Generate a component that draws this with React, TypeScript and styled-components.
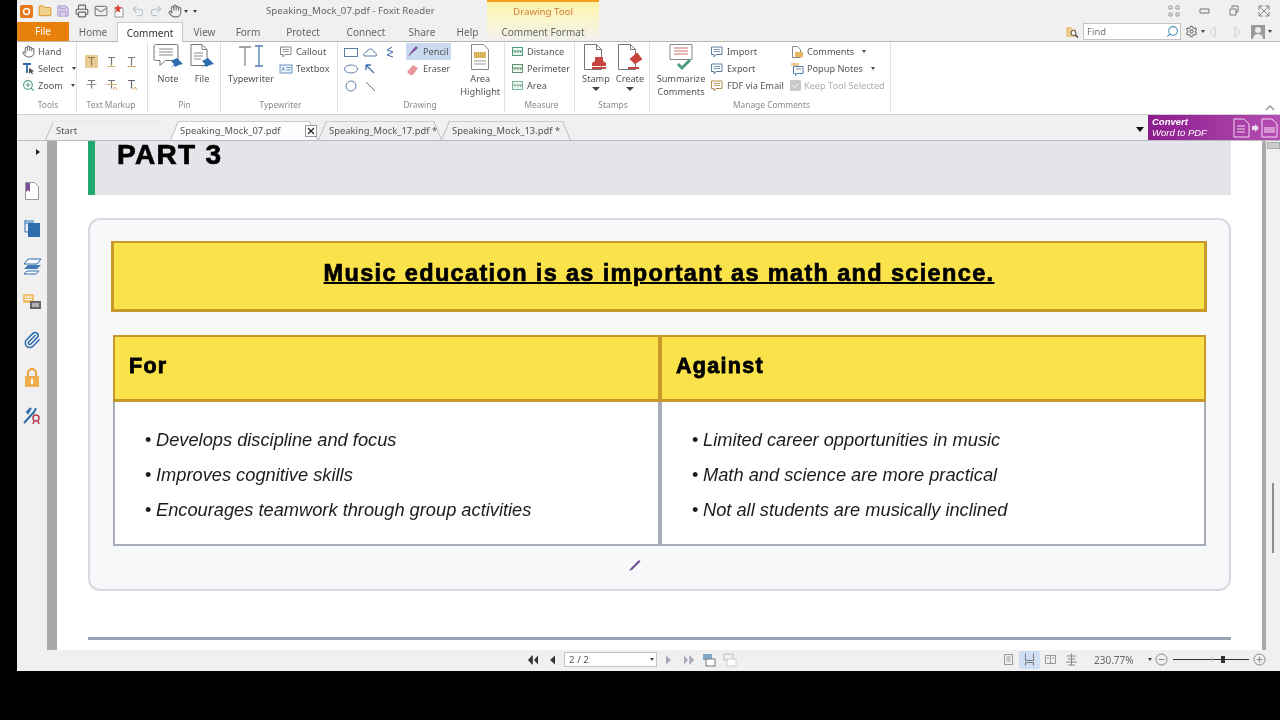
import * as React from 'react';
import styled, { createGlobalStyle } from 'styled-components';
import { Hand, Search, Settings, Undo2, Redo2, Printer, Paperclip, ZoomIn, Folder, Save, Mail } from 'lucide-react';

const Global = createGlobalStyle`
	html, body { margin: 0; padding: 0; background: #000; height: 100%; overflow: hidden; }
	* { box-sizing: border-box; }
`;

const Frame = styled.div`
	width: 1263px;
	height: 671px;
	margin-left: 17px;
	display: flex;
	flex-direction: column;
	background: #f0f0f0;
	font-family: "Noto Sans", "Open Sans", sans-serif;
	font-size: 9.2px;
	color: #555;
	overflow: hidden;
	filter: blur(0.3px);
`;

const TitleBar = styled.div`
	height: 22px;
	flex: none;
	display: flex;
	align-items: stretch;
`;

const Qab = styled.div`
	width: 249px;
	display: flex;
	align-items: center;
`;

const QabItem = styled.span`
	width: 18.6px;
	display: flex;
	justify-content: center;
	align-items: center;
`;

const Title = styled.div`
	width: 221px;
	line-height: 22px;
	font-size: 9.7px;
	color: #666;
`;

const ContextHead = styled.div`
	width: 112px;
	line-height: 20px;
	border-top: 2px solid #f2a21e;
	background: linear-gradient(#fdf2a8, #fbf5cf);
	color: #cf7f3a;
	text-align: center;
	font-size: 9.7px;
`;

const WinControls = styled.div`
	margin-left: auto;
	display: flex;
	align-items: center;
	padding-right: 1px;
`;

const WinBtn = styled.span`
	width: 30px;
	display: flex;
	justify-content: center;
`;

const MenuRow = styled.div`
	height: 19px;
	flex: none;
	display: flex;
	align-items: stretch;
	position: relative;
`;

const FileTab = styled.div`
	width: 52px;
	background: #e8810c;
	color: #fff;
	text-align: center;
	line-height: 19px;
	font-size: 10px;
`;

const MenuTab = styled.div<{ $w: number; $active?: boolean; $context?: boolean }>`
	width: ${(p) => p.$w}px;
	text-align: center;
	line-height: 20px;
	font-size: 10px;
	color: ${(p) => (p.$active ? '#333' : '#666')};
	background: ${(p) => (p.$active ? '#fff' : p.$context ? 'linear-gradient(#fbf5cf, #f0f0f0)' : 'transparent')};
	${(p) => p.$active && 'border: 1px solid #c8c8c8; border-bottom: none; position: relative; z-index: 1; height: 20px;'}
`;

const MenuRight = styled.div`
	margin-left: auto;
	display: flex;
	align-items: center;
	gap: 3px;
	padding-right: 8px;
`;

const FindBox = styled.div`
	width: 98px;
	height: 17px;
	margin-left: 1px;
	background: #fff;
	border: 1px solid #c4c4c4;
	display: flex;
	align-items: center;
	justify-content: space-between;
	padding: 0 1px 0 3px;
	color: #777;
	font-size: 9.5px;
`;

const Caret = styled.span<{ $c?: string }>`
	display: inline-block;
	width: 0;
	height: 0;
	border-left: 2.5px solid transparent;
	border-right: 2.5px solid transparent;
	border-top: 3px solid ${(p) => p.$c || '#444'};
	margin-left: 5px;
	vertical-align: middle;
`;

const Ribbon = styled.div`
	height: 74px;
	flex: none;
	background: #fff;
	border-top: 1px solid #b8b8b8;
	border-bottom: 1px solid #cfcfcf;
	display: flex;
	position: relative;
`;

const Group = styled.div<{ $w: number; $pl?: number }>`
	width: ${(p) => p.$w}px;
	padding: 1px 0 0 ${(p) => p.$pl || 0}px;
	border-right: 1px solid #e2e2e2;
	margin-bottom: 2px;
	display: flex;
	flex-direction: column;
`;

const GroupBody = styled.div`
	height: 55px;
	flex: none;
	display: flex;
	align-items: flex-start;
`;

const GroupLabel = styled.div`
	height: 14px;
	line-height: 13px;
	margin-left: -2px;
	text-align: center;
	font-size: 8.4px;
	color: #8a8a8a;
`;

const Stack = styled.div<{ $w?: number; $ml?: number }>`
	${(p) => p.$w && `width: ${p.$w}px;`}
	margin-left: ${(p) => p.$ml || 0}px;
	display: flex;
	flex-direction: column;
`;

const SmallBtn = styled.div<{ $on?: boolean; $off?: boolean }>`
	height: 17px;
	display: flex;
	align-items: center;
	gap: 3px;
	white-space: nowrap;
	background: ${(p) => (p.$on ? '#c9daf0' : 'transparent')};
	color: ${(p) => (p.$off ? '#b0b0b0' : '#555')};
	svg { flex: none; }
`;

const BigBtn = styled.div<{ $w: number; $ml?: number }>`
	width: ${(p) => p.$w}px;
	margin-left: ${(p) => p.$ml || 0}px;
	display: flex;
	flex-direction: column;
	align-items: center;
	line-height: 13px;
	text-align: center;
	svg { margin-bottom: 1px; flex: none; }
`;

const IconGrid = styled.div`
	display: grid;
	grid-template-columns: repeat(3, 20px);
	grid-auto-rows: 23px;
	justify-items: center;
	align-items: center;
	margin: 7px 0 0 4px;
`;

const ShapeGrid = styled.div`
	display: grid;
	grid-template-columns: 18px 20px 20px;
	grid-auto-rows: 17px;
	justify-items: center;
	align-items: center;
	margin-left: 4px;
`;

const Highlight = styled.span`
	width: 13px;
	height: 13px;
	background: #e9cb95;
	display: flex;
	align-items: center;
	justify-content: center;
`;

const Collapse = styled.span`
	position: absolute;
	right: 5px;
	bottom: 3px;
	line-height: 0;
`;

const TabBar = styled.div`
	height: 26px;
	flex: none;
	display: flex;
	align-items: flex-end;
	padding-left: 28px;
	border-bottom: 1px solid #b9bac2;
	position: relative;
`;

const DocTab = styled.div<{ $w: number; $active?: boolean; $faint?: boolean }>`
	width: ${(p) => p.$w}px;
	height: 19px;
	position: relative;
	line-height: 20px;
	font-size: 9.4px;
	color: #555;
	padding-left: ${(p) => (p.$active ? 10 : 11)}px;
	&::before, &::after {
		content: '';
		position: absolute;
		top: 0;
		bottom: 0;
		background: ${(p) => (p.$active ? '#fdfdfd' : '#f0f0f0')};
		border-top: 1px solid ${(p) => (p.$faint ? '#e6e6e6' : '#cdcdcd')};
		transform-origin: bottom;
	}
	&::before {
		left: 0;
		right: 50%;
		border-left: 1px solid #bdbdbd;
		transform: skewX(-23deg);
	}
	&::after {
		right: 0;
		left: 50%;
		border-right: 1px solid ${(p) => (p.$faint ? 'transparent' : '#bdbdbd')};
		transform: skewX(23deg);
	}
`;

const DocTabText = styled.span`
	position: relative;
	z-index: 1;
	white-space: nowrap;
`;

const CloseBox = styled.span`
	position: absolute;
	z-index: 1;
	right: 1px;
	top: 4px;
	width: 12px;
	height: 12px;
	border: 1px solid #999;
	background: #fff;
	display: flex;
	align-items: center;
	justify-content: center;
`;

const Promo = styled.div`
	margin-left: 4px;
	width: 132px;
	height: 25px;
	background: linear-gradient(90deg, #8b1c8d, #b54fb3);
	color: #fff;
	display: flex;
	align-items: center;
	justify-content: space-between;
	padding: 0 2px 0 4px;
	font-family: "Liberation Sans", sans-serif;
	font-style: italic;
	font-size: 9.5px;
	line-height: 10.5px;
`;

const PromoDrop = styled.span`
	width: 0;
	height: 0;
	border-left: 4px solid transparent;
	border-right: 4px solid transparent;
	border-top: 5px solid #111;
	margin: 0 0 8px auto;
`;

const PromoIcons = styled.span`
	display: flex;
	align-items: center;
	gap: 2px;
`;

const Main = styled.div`
	flex: 1;
	min-height: 0;
	display: flex;
`;

const Rail = styled.div`
	width: 30px;
	flex: none;
	display: flex;
	flex-direction: column;
	align-items: center;
	gap: 19.5px;
	padding-top: 8px;
`;

const RailToggle = styled.span`
	width: 0;
	height: 0;
	border-top: 3.5px solid transparent;
	border-bottom: 3.5px solid transparent;
	border-left: 4px solid #222;
	margin: 0 0 7px 12px;
`;

const Gutter = styled.div<{ $w: number }>`
	width: ${(p) => p.$w}px;
	flex: none;
	background: #a9a9ab;
	position: relative;
`;

const Grip = styled.span`
	position: absolute;
	left: 1px;
	right: 1px;
	top: 215px;
	height: 30px;
	background-image: radial-gradient(#8f8f91 0.6px, transparent 0.7px);
	background-size: 2px 2px;
`;

const Page = styled.div`
	flex: 1;
	min-width: 0;
	background: #fff;
	padding: 0 31px;
	overflow: hidden;
	position: relative;
`;

const Band = styled.div`
	height: 54px;
	background: #e4e5ea;
	border-left: 7px solid #1fa971;
	padding-left: 22px;
	margin-bottom: 23px;
`;

const PartTitle = styled.h1`
	margin: 0;
	font: 900 28px/28px "Liberation Sans", sans-serif;
	-webkit-text-stroke: 0.7px #000;
	letter-spacing: 1.3px;
	color: #000;
`;

const Card = styled.div`
	height: 373px;
	background: #f7f8fa;
	border: 2px solid #d6d9df;
	border-radius: 12px;
	padding: 21px 22px 0 21px;
	margin-bottom: 46px;
`;

const Topic = styled.div`
	height: 71px;
	background: #f9e24a;
	border: 3px solid #c9982a;
	border-top-width: 2px;
	padding-bottom: 6px;
	display: flex;
	align-items: center;
	justify-content: center;
	margin-bottom: 23px;
`;

const TopicText = styled.h2`
	margin: 0;
	font: 700 23.5px/26px "Liberation Sans", sans-serif;
	-webkit-text-stroke: 0.7px #000;
	letter-spacing: 1.35px;
	text-decoration: underline;
	text-decoration-thickness: 2px;
	color: #000;
`;

const Columns = styled.div`
	display: grid;
	grid-template-columns: 547px 546px;
	margin: 0 0 0 2px;
`;

const ColHead = styled.div`
	height: 67px;
	background: #f9e24a;
	border: 2px solid #c9982a;
	border-bottom-width: 3px;
	padding: 0 0 3px 14px;
	display: flex;
	align-items: center;
	font: 700 21.5px "Liberation Sans", sans-serif;
	-webkit-text-stroke: 0.8px #000;
	letter-spacing: 1.3px;
	color: #000;
`;

const ColBody = styled.ul`
	height: 144px;
	margin: 0;
	list-style: none;
	background: #fff;
	border: 2px solid #a9adb9;
	border-top: none;
	padding: 20px 0 0 30px;
`;

const Point = styled.li`
	height: 35px;
	font: italic 18.25px/35px "Liberation Sans", sans-serif;
	color: #1c1c1c;
	&::before {
		content: '•';
		font-style: normal;
		display: inline-block;
		width: 11px;
	}
`;

const Rule = styled.div`
	height: 3px;
	background: #9ba0b4;
`;

const PenCursor = styled.svg`
	position: absolute;
	left: 571px;
	top: 417px;
`;

const Scroller = styled.div`
	width: 14px;
	flex: none;
	position: relative;
`;

const ScrollCap = styled.span`
	position: absolute;
	top: 1px;
	left: 1px;
	right: 0;
	height: 7px;
	background: #ccc;
	border: 1px solid #aaa;
`;

const ScrollThumb = styled.span`
	position: absolute;
	top: 342px;
	left: 6px;
	width: 2px;
	height: 70px;
	background: #8e8e96;
`;

const StatusBar = styled.div`
	height: 21px;
	flex: none;
	display: flex;
	align-items: center;
	padding: 0 0 2px 509px;
`;

const PagerBtn = styled.span<{ $w: number }>`
	width: ${(p) => p.$w}px;
	display: flex;
	justify-content: center;
`;

const PageInput = styled.div`
	width: 93px;
	height: 15px;
	margin: 0 5px 0 0;
	background: #fff;
	border: 1px solid #c4c4c4;
	display: flex;
	align-items: center;
	justify-content: space-between;
	padding: 0 2px 0 4px;
	font-size: 9.8px;
	line-height: 13px;
	color: #555;
`;

const StatusRight = styled.div`
	margin-left: auto;
	display: flex;
	align-items: center;
	padding-right: 14px;
`;

const ViewBtn = styled.span<{ $on?: boolean }>`
	width: 21px;
	height: 18px;
	display: flex;
	align-items: center;
	justify-content: center;
	background: ${(p) => (p.$on ? '#cfe0f5' : 'transparent')};
`;

const Zoom = styled.span`
	margin-left: 12px;
	width: 54px;
	font-size: 10px;
	color: #666;
`;

const SliderTrack = styled.span`
	position: relative;
	width: 76px;
	height: 1px;
	background: #333;
	margin: 0 4px 0 5px;
`;

const SliderThumb = styled.span`
	position: absolute;
	left: 48px;
	top: -3px;
	width: 4px;
	height: 7px;
	background: #333;
`;

const SliderTick = styled.span`
	position: absolute;
	left: 38px;
	top: -2px;
	width: 1px;
	height: 5px;
	background: #bbb;
`;

const Svg = ({ s = 14, w, h, vb, children }: { s?: number; w?: number; h?: number; vb?: string; children: React.ReactNode }) => (
	<svg width={w || s} height={h || s} viewBox={vb || `0 0 ${w || s} ${h || s}`} fill="none">
		{children}
	</svg>
);

const Tee = ({ c = '#777', under = '#d9b36a', mark = false, strike = false }: { c?: string; under?: string; mark?: boolean; strike?: boolean }) => (
	<Svg s={13}>
		<path d="M3 2.5h7M6.5 2.5v8" stroke={c} strokeWidth="1.2" />
		{!strike && <path d="M2.5 11.5h8" stroke={under} strokeWidth="1" />}
		{strike && <path d="M1.5 6.5h10" stroke={under} strokeWidth="1" />}
		{mark && <path d="M8 12l2-3 2 3" stroke="#e0a060" strokeWidth="1" />}
	</Svg>
);

const Bubble = ({ c = '#777' }: { c?: string }) => (
	<Svg s={14}>
		<path d="M1.5 2h10.5v7.5H6l-2 2.5v-2.5H1.5z" stroke={c} fill="#fff" />
		<path d="M3.5 4.5h6.5M3.5 6.5h6.5" stroke={c} strokeWidth="0.8" />
	</Svg>
);

const PinMark = () => <path d="M17 26l4-5-3-3 6-3 6 6-4 1-4 2-1-2z" fill="#2d6cad" />;

const NoteIcon = () => (
	<Svg w={30} h={28}>
		<path d="M2.5 1.5h21a1.500 1.500 0 0 1 1.500 1.500v13a1.500 1.500 0 0 1-1.500 1.500H12l-5 5v-5H2.500A1.500 1.500 0 0 1 1 16V3a1.500 1.500 0 0 1 1.500-1.500z" stroke="#777" fill="#fff" />
		<path d="M6 6h14M6 9h14M6 12h14" stroke="#888" />
		<PinMark />
	</Svg>
);

const FileIcon = () => (
	<Svg w={26} h={28}>
		<path d="M2 1.500h11l5 5v16H2z" stroke="#777" fill="#fff" />
		<path d="M13 1.500v5h5M5 10h9M5 13h9M5 16h7" stroke="#888" />
		<g transform="translate(-5 0)"><PinMark /></g>
	</Svg>
);

const TypewriterIcon = () => (
	<Svg w={28} h={28}>
		<path d="M2 4h12M8 4v19" stroke="#888" strokeWidth="1.300" />
		<path d="M18 3h8M22 3v20M18 23h8" stroke="#4a7fb5" strokeWidth="1.300" />
	</Svg>
);

const DocBase = () => <path d="M1.500 1.500h12l5 5v20h-17z" stroke="#777" fill="#fff" />;

const StampIcon = () => (
	<Svg w={26} h={28}>
		<DocBase />
		<path d="M13.500 1.500v5h5" stroke="#777" />
		<path d="M12 14h8v4l3 2v3H9v-3l3-2z" fill="#c8453f" />
		<path d="M9 25h14" stroke="#c8453f" strokeWidth="2" />
	</Svg>
);

const CreateIcon = () => (
	<Svg w={26} h={28}>
		<DocBase />
		<path d="M13.500 1.500v5h5" stroke="#777" />
		<path d="M14 16l6-5 4 5-6 4zM11 25h11" stroke="#c8453f" strokeWidth="2" fill="#c8453f" />
	</Svg>
);

const AreaIcon = () => (
	<Svg w={20} h={28}>
		<path d="M1.500 1.500h12l5 5v20h-17z" stroke="#888" fill="#fff" />
		<rect x="4" y="9" width="12" height="6" fill="#e9c56a" />
		<path d="M4 10h12M4 12h12M4 14h12" stroke="#8a6a2a" strokeWidth="0.700" strokeDasharray="1 1" />
		<path d="M4 18h12M4 21h12" stroke="#999" />
	</Svg>
);

const SummaryIcon = () => (
	<Svg w={26} h={28}>
		<path d="M2 1.500h22v15H2z" stroke="#888" fill="#fff" />
		<path d="M6 5h14M6 8h14M6 11h14" stroke="#d0706a" />
		<path d="M10 21l4 4 8-8" stroke="#4f9a83" strokeWidth="3" />
	</Svg>
);

const Ruler = ({ c }: { c: string }) => (
	<Svg s={13}>
		<rect x="1.500" y="2.500" width="10" height="8" stroke={c} fill="#eef7ee" />
		<path d="M1.500 6h10M4 6v2M7 6v2M9.500 6v2" stroke={c} />
	</Svg>
);

const DocSmall = () => (
	<Svg s={14}>
		<path d="M2.500 1.500h5l3 3v8h-8z" stroke="#888" fill="#fff" />
		<rect x="5" y="7" width="8" height="5" fill="#e9b560" />
	</Svg>
);

const PopupIcon = () => (
	<Svg s={14}>
		<path d="M1 1h8v3H1z" fill="#f0c890" />
		<path d="M3.500 4.500h9.500v7H7l-1.500 2v-2h-2z" stroke="#4a7fb5" fill="#fff" />
		<path d="M6 7h5" stroke="#888" />
	</Svg>
);

const Pager = ({ dir = 1, double = false, c = '#333' }: { dir?: number; double?: boolean; c?: string }) => (
	<Svg w={12} h={10}>
		<g transform={dir < 0 ? 'matrix(-1 0 0 1 12 0)' : undefined}>
			{double && <path d="M1 0.500v9l4-4.500z" fill={c} />}
			{double ? <path d="M7 0.500v9l4-4.500zM6 0.500h.8v9H6z" fill={c} /> : <path d="M3 0.500v9l5-4.500z" fill={c} />}
		</g>
	</Svg>
);

const PageView = ({ kind }: { kind: number }) => (
	<Svg s={13}>
		{kind === 0 && <path d="M2.500 1.500h8v10h-8zM4.500 4h4M4.500 6h4M4.500 8h4" stroke="#999" />}
		{kind === 1 && <path d="M2.500 .5v7h8v-7M2.500 12.500v-3h8v3" stroke="#777" />}
		{kind === 2 && <path d="M1.500 2.500h10v8h-10zM6.500 2.500v8M3 5h2M8 5h2" stroke="#999" />}
		{kind === 3 && <path d="M6.500 .5v12M2 3h9M3 6h7M1 9h11M3 12h7" stroke="#888" />}
	</Svg>
);

const Circled = ({ plus = false }: { plus?: boolean }) => (
	<Svg s={13}>
		<circle cx="6.500" cy="6.500" r="5.500" stroke="#888" />
		<path d={plus ? 'M3.500 6.500h6M6.500 3.500v6' : 'M3.500 6.500h6'} stroke="#888" />
	</Svg>
);

const App = (): React.ReactElement => (
	<Frame>
		<Global />
		<TitleBar>
			<Qab>
				<QabItem>
					<Svg s={13}><rect width="13" height="13" rx="2" fill="#e8761a" /><circle cx="6.500" cy="6.500" r="3" stroke="#fff" strokeWidth="1.500" /></Svg>
				</QabItem>
				<QabItem><Folder size={14} color="#d9a441" fill="#f1d08a" /></QabItem>
				<QabItem><Save size={14} color="#b7a6d6" fill="#d8cdeb" /></QabItem>
				<QabItem><Printer size={14} color="#666" /></QabItem>
				<QabItem><Mail size={14} color="#888" /></QabItem>
				<QabItem>
					<Svg s={14}><path d="M3 4h8v9H3z" stroke="#999" fill="#fff" /><path d="M6 0l1 3 3 .5-2.500 2 1 3L6 7 3.500 8.500l1-3-2.500-2L5 3z" fill="#d9402f" /></Svg>
				</QabItem>
				<QabItem><Undo2 size={14} color="#b8c4d0" /></QabItem>
				<QabItem><Redo2 size={14} color="#b8c4d0" /></QabItem>
				<QabItem><Hand size={14} color="#777" /></QabItem>
				<Caret style={{ marginLeft: 0 }} />
				<Caret />
			</Qab>
			<Title>Speaking_Mock_07.pdf - Foxit Reader</Title>
			<ContextHead>Drawing Tool</ContextHead>
			<WinControls>
				<WinBtn>
					<Svg s={12}><path d="M1 1h3v3H1zM8 1h3v3H8zM1 8h3v3H1zM8 8h3v3H8z" stroke="#999" /></Svg>
				</WinBtn>
				<WinBtn>
					<Svg w={11} h={6}><path d="M1 1h9v4H1z" stroke="#777" /></Svg>
				</WinBtn>
				<WinBtn>
					<Svg s={12}><path d="M4 3V1h6v6H8M2 4h6v6H2z" stroke="#777" /></Svg>
				</WinBtn>
				<WinBtn>
					<Svg s={12}><path d="M1 1l10 10M11 1L1 11M1 5V1h4M7 1h4v4M11 7v4H7M5 11H1V7" stroke="#888" /></Svg>
				</WinBtn>
			</WinControls>
		</TitleBar>
		<MenuRow>
			<FileTab>File</FileTab>
			<MenuTab $w={48}>Home</MenuTab>
			<MenuTab $w={66} $active>Comment</MenuTab>
			<MenuTab $w={43}>View</MenuTab>
			<MenuTab $w={44}>Form</MenuTab>
			<MenuTab $w={66}>Protect</MenuTab>
			<MenuTab $w={60}>Connect</MenuTab>
			<MenuTab $w={52}>Share</MenuTab>
			<MenuTab $w={39}>Help</MenuTab>
			<MenuTab $w={112} $context>Comment Format</MenuTab>
			<MenuRight>
				<Svg s={14}><path d="M1 2h5l2 2h3v8H1z" fill="#ecc98c" /><circle cx="8.500" cy="8" r="2.500" stroke="#444" fill="#fff" /><path d="M10.500 10l2.500 2.500" stroke="#444" strokeWidth="1.500" /></Svg>
				<FindBox>
					Find
					<Search size={13} color="#4a8cb5" style={{ transform: 'scaleX(-1)' }} />
				</FindBox>
				<Settings size={13} color="#777" style={{ marginLeft: 1 }} />
				<Caret style={{ marginLeft: 0 }} />
				<Svg w={10} h={12} vb="0 0 10 12"><path d="M7 1v10L2 6z" stroke="#ccc" fill="#f4f4f4" /></Svg>
				<span style={{ width: 8 }} />
				<Svg w={10} h={12} vb="0 0 10 12"><path d="M3 1v10l5-5z" stroke="#ccc" fill="#f4f4f4" /></Svg>
				<span style={{ width: 3 }} />
				<Svg s={14}><rect width="14" height="14" fill="#9a9a9a" /><circle cx="7" cy="5" r="3" fill="#eee" /><path d="M2 14c0-4 3-5 5-5s5 1 5 5z" fill="#eee" /></Svg>
				<Caret style={{ marginLeft: 0 }} />
			</MenuRight>
		</MenuRow>
		<Ribbon>
			<Group $w={60} $pl={5}>
				<GroupBody>
					<Stack>
						<SmallBtn><Hand size={13} color="#777" />Hand</SmallBtn>
						<SmallBtn>
							<Svg s={13}><path d="M1 2h8M5 2v9" stroke="#2d6cad" strokeWidth="1.800" /><path d="M7 6l5 3-2 1 1 2-1 .5-1-2-2 1z" fill="#555" /></Svg>
							Select<Caret />
						</SmallBtn>
						<SmallBtn><ZoomIn size={13} color="#4f9a83" />Zoom<Caret /></SmallBtn>
					</Stack>
				</GroupBody>
				<GroupLabel>Tools</GroupLabel>
			</Group>
			<Group $w={71}>
				<GroupBody>
					<IconGrid>
						<Highlight><Tee under="transparent" c="#9a7a40" /></Highlight>
						<Tee />
						<Tee under="#c9a060" />
						<Tee strike under="#999" />
						<Tee mark under="#d9b36a" strike />
						<Tee mark c="#666" under="transparent" />
					</IconGrid>
				</GroupBody>
				<GroupLabel>Text Markup</GroupLabel>
			</Group>
			<Group $w={73} $pl={3}>
				<GroupBody>
					<BigBtn $w={34}><NoteIcon />Note</BigBtn>
					<BigBtn $w={34}><FileIcon />File</BigBtn>
				</GroupBody>
				<GroupLabel>Pin</GroupLabel>
			</Group>
			<Group $w={117} $pl={5}>
				<GroupBody>
					<BigBtn $w={50}><TypewriterIcon />Typewriter</BigBtn>
					<Stack $ml={3}>
						<SmallBtn><Bubble c="#888" />Callout</SmallBtn>
						<SmallBtn>
							<Svg s={14}><rect x="1" y="3" width="12" height="8" stroke="#6a93bd" fill="#eaf1f8" /><path d="M7.500 5.500h4M7.500 8h4M3 8.500l1.200-3 1.200 3" stroke="#6a93bd" /></Svg>
							Textbox
						</SmallBtn>
					</Stack>
				</GroupBody>
				<GroupLabel>Typewriter</GroupLabel>
			</Group>
			<Group $w={167}>
				<GroupBody>
					<ShapeGrid>
						<Svg w={14} h={10}><rect x="0.500" y="1.500" width="13" height="8" stroke="#5a7fa5" /></Svg>
						<Svg w={14} h={11}><path d="M1 10c-1-3 2-4 3-4 0-3 6-5 7 0 2 0 3 3 2 4z" stroke="#5a7fa5" /></Svg>
						<Svg s={12}><path d="M8 1L3 4l6 2-6 3 6 2" stroke="#3f6fb0" /></Svg>
						<Svg w={14} h={10}><ellipse cx="7" cy="5" rx="6.500" ry="4" stroke="#5a7fa5" /></Svg>
						<Svg s={12}><path d="M2 2l8 8M2 2h5M2 2v5" stroke="#3f6fb0" strokeWidth="1.300" /></Svg>
						<span />
						<Svg s={12}><circle cx="6" cy="6" r="5" stroke="#5a7fa5" /></Svg>
						<Svg s={12}><path d="M2 2l9 9" stroke="#777" /></Svg>
					</ShapeGrid>
					<Stack $w={45} $ml={6}>
						<SmallBtn $on>
							<Svg s={14}><path d="M2 12l2-4 6-7 2 2-7 6z" fill="#7a4fa0" /></Svg>
							Pencil
						</SmallBtn>
						<SmallBtn>
							<Svg s={14}><path d="M1 10l6-7 5 3-5 7H4z" fill="#e9969a" /></Svg>
							Eraser
						</SmallBtn>
					</Stack>
					<BigBtn $w={48} $ml={6}>
						<AreaIcon />Area<br />Highlight
					</BigBtn>
				</GroupBody>
				<GroupLabel>Drawing</GroupLabel>
			</Group>
			<Group $w={70} $pl={6}>
				<GroupBody>
					<Stack>
						<SmallBtn><Ruler c="#4f9a83" />Distance</SmallBtn>
						<SmallBtn><Ruler c="#5f8f70" />Perimeter</SmallBtn>
						<SmallBtn><Ruler c="#7fb59a" />Area</SmallBtn>
					</Stack>
				</GroupBody>
				<GroupLabel>Measure</GroupLabel>
			</Group>
			<Group $w={75} $pl={4}>
				<GroupBody>
					<BigBtn $w={34}>
						<StampIcon />Stamp
						<Caret style={{ margin: '2px 0 0', borderWidth: '4px 4px 0' }} />
					</BigBtn>
					<BigBtn $w={34}>
						<CreateIcon />Create
						<Caret style={{ margin: '2px 0 0', borderWidth: '4px 4px 0' }} />
					</BigBtn>
				</GroupBody>
				<GroupLabel>Stamps</GroupLabel>
			</Group>
			<Group $w={241} $pl={5}>
				<GroupBody>
					<BigBtn $w={52}>
						<SummaryIcon />Summarize<br />Comments
					</BigBtn>
					<Stack $w={80} $ml={3}>
						<SmallBtn><Bubble c="#5a7fa5" />Import</SmallBtn>
						<SmallBtn><Bubble c="#5a7fa5" />Export</SmallBtn>
						<SmallBtn><Bubble c="#b08a50" />FDF via Email</SmallBtn>
					</Stack>
					<Stack>
						<SmallBtn><DocSmall />Comments<Caret /></SmallBtn>
						<SmallBtn><PopupIcon />Popup Notes<Caret /></SmallBtn>
						<SmallBtn $off>
							<Svg s={11}><rect width="11" height="11" rx="1" fill="#c9c9c9" /><path d="M2.500 5.500l2 2 4-4" stroke="#fff" /></Svg>
							Keep Tool Selected
						</SmallBtn>
					</Stack>
				</GroupBody>
				<GroupLabel>Manage Comments</GroupLabel>
			</Group>
			<Collapse>
				<Svg w={10} h={6}><path d="M1 5l4-4 4 4" stroke="#999" strokeWidth="1.500" /></Svg>
			</Collapse>
		</Ribbon>
		<TabBar>
			<DocTab $w={125} $faint><DocTabText>Start</DocTabText></DocTab>
			<DocTab $w={148} $active style={{ zIndex: 1 }}>
				<DocTabText>Speaking_Mock_07.pdf</DocTabText>
				<CloseBox>
					<Svg s={8}><path d="M1 1l6 6M7 1L1 7" stroke="#222" strokeWidth="1.200" /></Svg>
				</CloseBox>
			</DocTab>
			<DocTab $w={123}><DocTabText>Speaking_Mock_17.pdf *</DocTabText></DocTab>
			<DocTab $w={129}><DocTabText>Speaking_Mock_13.pdf *</DocTabText></DocTab>
			<PromoDrop />
			<Promo>
				<span>
					<b>Convert</b>
					<br />
					Word to PDF
				</span>
				<PromoIcons>
					<Svg w={17} h={20}><path d="M1 1h10l5 5v13H1z" stroke="#f3d7f2" /><path d="M4 8h8M4 11h8M4 14h8" stroke="#f3d7f2" /></Svg>
					<Svg w={7} h={8}><path d="M0 2h3V0l4 4-4 4V6H0z" fill="#f3d7f2" /></Svg>
					<Svg w={17} h={20}><path d="M1 1h10l5 5v13H1z" stroke="#f3d7f2" /><path d="M3 9h11v6H3z" fill="#d795d4" /></Svg>
				</PromoIcons>
			</Promo>
		</TabBar>
		<Main>
			<Rail>
				<RailToggle />
				<Svg w={16} h={18}>
					<path d="M1.500 .5h9l4 4v13h-13z" stroke="#999" fill="#fff" />
					<path d="M2 1h4v9l-2-2-2 2z" fill="#7a4f95" />
				</Svg>
				<Svg w={16} h={18}>
					<path d="M1 1h9v4H1z" fill="#8fb4dc" />
					<path d="M1 1v12h3" stroke="#2d6cad" />
					<rect x="4" y="4" width="12" height="14" fill="#2d6cad" />
				</Svg>
				<Svg w={19} h={18}>
					<path d="M5 2h13l-4 5H1zM5 8h13l-4 4H1z" fill="#2d6cad" opacity="0.900" />
					<path d="M4 14h12l-3 3H1zM5 2h13l-4 5H1z" stroke="#2d6cad" fill="#fff" />
				</Svg>
				<Svg w={18} h={17}>
					<rect width="11" height="9" rx="1" fill="#f0c070" />
					<path d="M2 3h7M2 5.500h7" stroke="#fff" />
					<rect x="7" y="7" width="11" height="8" fill="#666" />
					<path d="M9 10h7M9 12h7" stroke="#fff" />
				</Svg>
				<Paperclip size={18} color="#2d6cad" />
				<Svg w={16} h={19}>
					<path d="M4 8V5a4 4 0 0 1 8 0v3" stroke="#e8a33d" strokeWidth="2" />
					<rect x="1" y="8" width="14" height="11" fill="#efb04f" />
					<rect x="7" y="11" width="2" height="5" fill="#fff" />
				</Svg>
				<Svg w={18} h={18}>
					<path d="M1 16L11 5M8 1l-3 5-1-1zM13 1l-3 6" stroke="#2d6cad" strokeWidth="2" />
					<circle cx="13" cy="11" r="3" stroke="#b5404f" strokeWidth="1.500" />
					<path d="M11 14l-1 3M15 14l1 3" stroke="#b5404f" strokeWidth="1.500" />
				</Svg>
			</Rail>
			<Gutter $w={10}><Grip /></Gutter>
			<Page>
				<Band><PartTitle>PART 3</PartTitle></Band>
				<Card>
					<Topic><TopicText>Music education is as important as math and science.</TopicText></Topic>
					<Columns>
						<div>
							<ColHead>For</ColHead>
							<ColBody>
								<Point>Develops discipline and focus</Point>
								<Point>Improves cognitive skills</Point>
								<Point>Encourages teamwork through group activities</Point>
							</ColBody>
						</div>
						<div>
							<ColHead>Against</ColHead>
							<ColBody>
								<Point>Limited career opportunities in music</Point>
								<Point>Math and science are more practical</Point>
								<Point>Not all students are musically inclined</Point>
							</ColBody>
						</div>
					</Columns>
				</Card>
				<Rule />
				<PenCursor width="14" height="14" viewBox="0 0 14 14" fill="none">
					<path d="M1 13l2-3 8-8 1.500 1.500-8 8z" fill="#6b4a8f" />
				</PenCursor>
			</Page>
			<Gutter $w={4} />
			<Scroller>
				<ScrollCap />
				<ScrollThumb />
			</Scroller>
		</Main>
		<StatusBar>
			<PagerBtn $w={14}><Pager dir={-1} double /></PagerBtn>
			<PagerBtn $w={24}><Pager dir={-1} /></PagerBtn>
			<PageInput>2 / 2<Caret /></PageInput>
			<PagerBtn $w={14}><Pager c="#aab" /></PagerBtn>
			<PagerBtn $w={25}><Pager double c="#aab" /></PagerBtn>
			<PagerBtn $w={16}>
				<Svg s={14}><rect x="1" y="1" width="9" height="6" fill="#7fa8c9" /><rect x="4" y="6" width="9" height="7" stroke="#777" fill="#fff" /></Svg>
			</PagerBtn>
			<PagerBtn $w={26}>
				<Svg s={14}><rect x="1" y="1" width="9" height="6" stroke="#bbc" /><rect x="4" y="6" width="9" height="7" stroke="#ccc" fill="#fff" /></Svg>
			</PagerBtn>
			<StatusRight>
				<ViewBtn><PageView kind={0} /></ViewBtn>
				<ViewBtn $on><PageView kind={1} /></ViewBtn>
				<ViewBtn><PageView kind={2} /></ViewBtn>
				<ViewBtn><PageView kind={3} /></ViewBtn>
				<Zoom>230.77%</Zoom>
				<Caret style={{ margin: '0 3px 0 0' }} />
				<Circled />
				<SliderTrack><SliderTick /><SliderThumb /></SliderTrack>
				<Circled plus />
			</StatusRight>
		</StatusBar>
	</Frame>
);

export default App;
